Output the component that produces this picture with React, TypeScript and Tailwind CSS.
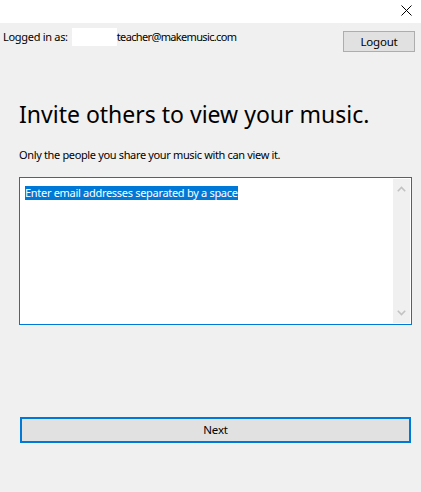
const Chevron = ({ up }: { up?: boolean }) => (
  <svg width="9" height="6" viewBox="0 0 9 6" className="block">
    <path
      d={up ? "M0.8 5.2 L4.5 1.5 L8.2 5.2" : "M0.8 0.8 L4.5 4.5 L8.2 0.8"}
      fill="none"
      stroke="#c2c2c2"
      strokeWidth="1.6"
    />
  </svg>
);

export default function App() {
  return (
    <div
      className="w-[421px] h-[492px] bg-[#f0f0f0] flex flex-col text-black overflow-hidden"
      style={{ fontFamily: '"Noto Sans", "Open Sans", sans-serif' }}
    >
      <div className="h-[23px] bg-white flex justify-end items-start shrink-0">
        <svg width="11" height="11" viewBox="0 0 11 11" className="mt-[5px] mr-[9px]">
          <path d="M0.5 0.5 L10.5 10.5 M10.5 0.5 L0.5 10.5" stroke="#000" strokeWidth="1" />
        </svg>
      </div>

      <div className="flex justify-between items-start">
        <div className="flex items-center pl-[3px] pt-[5px] text-[11px] leading-[16px] tracking-[-0.3px]">
          <span>Logged in as:</span>
          <span className="w-[45px] h-[18px] bg-white ml-[4px]" />
          <span className="tracking-[-0.65px]">teacher@makemusic.com</span>
        </div>
        <button className="mt-[8px] mr-[6px] w-[72px] h-[21px] border border-[#adadad] bg-[#e1e1e1] text-[11.5px] leading-[16px] tracking-[-0.2px]">
          Logout
        </button>
      </div>

      <h1 className="mt-[46px] pl-[19px] text-[23px] leading-[32px] font-normal">
        Invite others to view your music.
      </h1>

      <p className="mt-[17px] pl-[19px] text-[11px] leading-[16px] tracking-[-0.35px]">
        Only the people you share your music with can view it.
      </p>

      <div className="mt-[14px] ml-[19px] w-[393px] h-[148px] border border-[#0078d7] bg-white flex">
        <div className="flex-1 pl-[5px] pt-[1px]">
          <span className="bg-[#0078d7] text-white text-[11px] leading-[14px] tracking-[-0.3px] inline-block">
            Enter email addresses separated by a space
          </span>
        </div>
        <div className="w-[17px] my-[1px] mr-[1px] bg-[#f0f0f0] flex flex-col items-center justify-between py-[7px]">
          <Chevron up />
          <Chevron />
        </div>
      </div>

      <div className="flex-1" />

      <button className="mb-[49px] ml-[20px] w-[391px] h-[26px] border-2 border-[#0078d7] bg-[#e1e1e1] text-[11.5px] leading-[16px] tracking-[-0.2px]">
        Next
      </button>
    </div>
  );
}
